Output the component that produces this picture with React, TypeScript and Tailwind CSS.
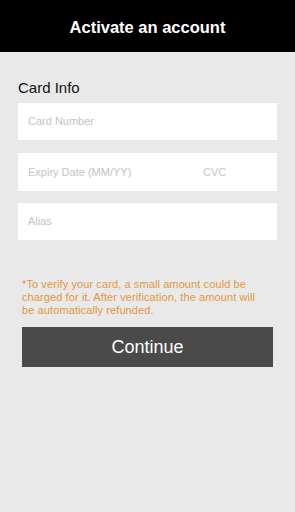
export default function App() {
  return (
    <div
      className="flex min-h-[512px] w-full flex-col bg-[#e9e9e9]"
      style={{ fontFamily: '"Liberation Sans", Arial, sans-serif' }}
    >
      <header className="flex h-[52px] items-center justify-center bg-black pt-[2px]">
        <h1 className="text-[16.5px] font-bold text-white">Activate an account</h1>
      </header>

      <div className="flex flex-col px-[18px] pt-[27px]">
        <p className="text-[15px] leading-[18px] text-[#111]">Card Info</p>

        <div className="mt-[6px] flex h-[37px] items-center bg-white pl-[10px] text-[11px] text-[#c4c4c4]">
          Card Number
        </div>

        <div className="mt-[13px] flex h-[38px] items-center bg-white pl-[10px] text-[11px] text-[#c4c4c4]">
          <span className="w-[175px]">Expiry Date (MM/YY)</span>
          <span>CVC</span>
        </div>

        <div className="mt-[12px] flex h-[37px] items-center bg-white pl-[10px] text-[11px] text-[#c4c4c4]">
          Alias
        </div>

        <p className="mt-[38px] pl-[4px] pr-[9px] text-[11px] leading-[13px] tracking-[0.1px] text-[#e3983f]">
          *To verify your card, a small amount could be charged for it. After verification, the amount will be automatically refunded.
        </p>

        <button className="mx-[4px] mt-[10px] flex h-[40px] items-center justify-center bg-[#4a4a4a] text-[18px] text-white">
          Continue
        </button>
      </div>
    </div>
  );
}
